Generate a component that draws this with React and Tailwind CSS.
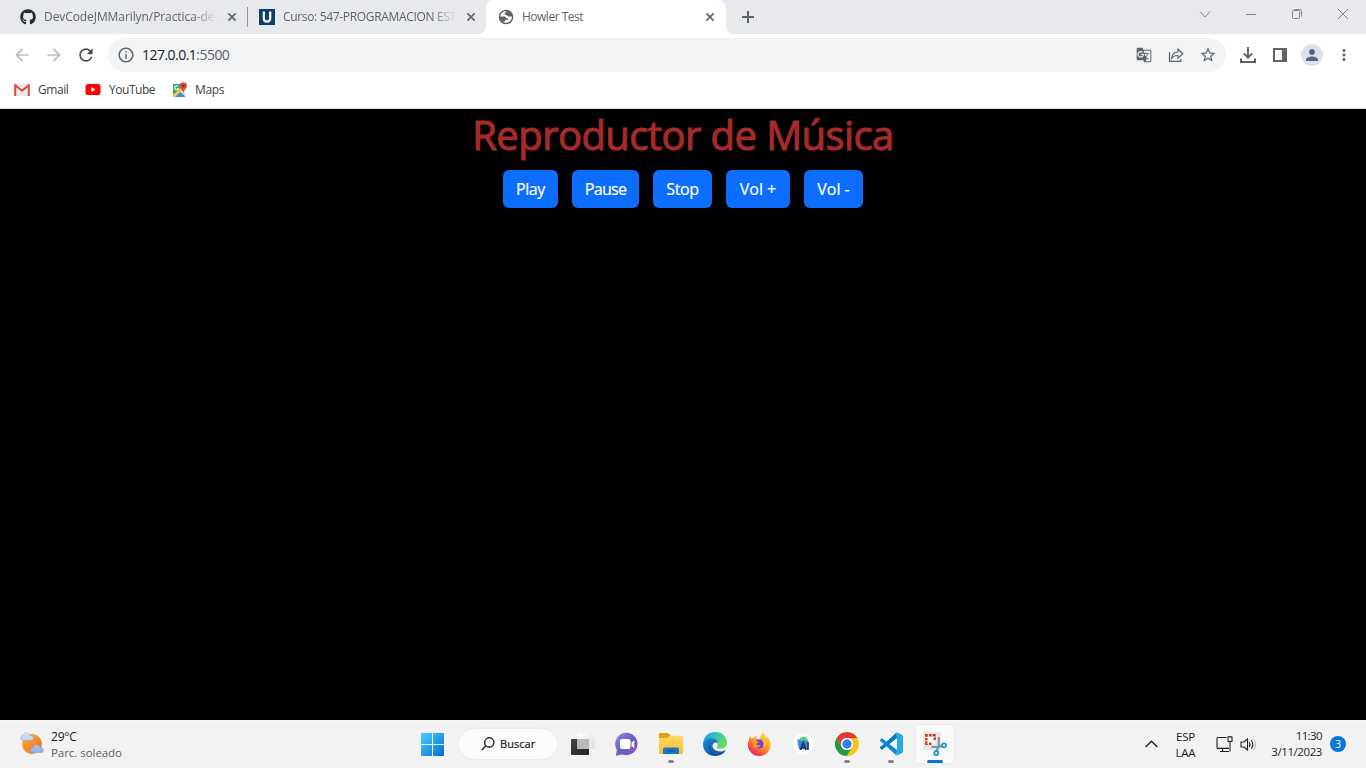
import React from 'react';
import { MdArrowBack, MdArrowForward, MdRefresh, MdInfoOutline, MdGTranslate, MdStarBorder, MdPerson, MdMoreVert } from 'react-icons/md';
import { FaGithub } from 'react-icons/fa';

function TabClose() {
  return (
    <svg className="h-[10px] w-[10px] shrink-0" viewBox="0 0 10 10" stroke="#5f6368" strokeWidth="1.6">
      <path d="M1.4 1.4 8.6 8.6M8.6 1.4 1.4 8.6" />
    </svg>
  );
}

function TabStrip() {
  return (
    <div className="flex h-[34px] shrink-0 bg-white text-[12px] text-[#5f6368]">
      <div className="flex w-[486px] rounded-br-lg bg-[#e8e9ed]">
        <div className="flex w-[247px] items-center pl-5">
          <FaGithub className="h-4 w-4 shrink-0 text-[#24292f]" />
          <span className="ml-2 w-[176px] shrink-0 whitespace-nowrap tracking-[-0.08px] [mask-image:linear-gradient(to_right,black_148px,transparent_173px)]">DevCodeJMMarilyn/Practica-de-</span>
          <span className="ml-[7px] flex"><TabClose /></span>
        </div>
        <div className="mt-[7px] h-5 w-px bg-[#909297]" />
        <div className="flex w-[238px] items-center pl-[11px]">
          <svg className="h-4 w-4 shrink-0" viewBox="0 0 16 16">
            <path fill="#103d69" d="M0 0h16v16H0z" />
            <path d="M4.8 2.5v6.7q0 3.4 3.2 3.4t3.2-3.4V2.5" fill="none" stroke="#fff" strokeWidth="2.2" />
          </svg>
          <span className="ml-2 w-[176px] shrink-0 whitespace-nowrap tracking-[-0.33px] [mask-image:linear-gradient(to_right,black_148px,transparent_173px)]">Curso: 547-PROGRAMACION EST</span>
          <span className="ml-[7px] flex"><TabClose /></span>
        </div>
      </div>
      <div className="flex w-[240px] bg-[#e8e9ed]">
        <div className="flex w-full items-center rounded-t-lg bg-white pl-3">
          <svg className="h-4 w-4 shrink-0" viewBox="0 0 16 16">
            <circle cx="8" cy="8" r="7.3" fill="#5f6368" />
            <path fill="#fff" d="M2.2 7.5c.5-2.9 2.9-5.3 6-5.5-.1 1.1-.6 1.9-1.5 1.9-.3 1.4.3 2.1 1.6 2.2 1 .1 1.1 1.4 2.2 1.4h3.3c.4 3-1.9 6-5.4 6.3-1.3.1-2.4-.1-3.2-.7 1.2-.1 2.1-.8 2.1-2h1.5c.9 0 1.3-.7 1-1.7-1.1-.2-2-.4-2.4-1.3-.4-.9-2-.6-5.2-.6z" />
          </svg>
          <span className="ml-2 w-[183px] shrink-0 whitespace-nowrap tracking-[-0.5px]">Howler Test</span>
          <TabClose />
        </div>
      </div>
      <div className="flex flex-1 rounded-bl-lg bg-[#e8e9ed]">
        <div className="flex w-11 items-center justify-center">
          <svg className="h-3 w-3" viewBox="0 0 12 12" stroke="#5f6368" strokeWidth="2"><path d="M6 0v12M0 6h12" /></svg>
        </div>
        <svg className="ml-auto h-[28px] w-[184px]" viewBox="1182 0 184 28" fill="none" stroke="#85868a" strokeWidth="1">
          <path d="m1200 11.5 5 5.5 5-5.5M1246 14.5h10M1292.5 11.5q0-1 1-1h5q1 0 1 1v6q0 1-1 1h-5q-1 0-1-1zM1294.5 9.5h5q2 0 2 2v5M1338 9l10 10M1348 9l-10 10" />
        </svg>
      </div>
    </div>
  );
}

function Toolbar() {
  return (
    <div className="flex h-[41px] shrink-0 items-center bg-white pl-3 text-[#5f6368]">
      <MdArrowBack className="h-5 w-5 text-[#babcbe]" />
      <MdArrowForward className="ml-3 h-5 w-5 text-[#babcbe]" />
      <MdRefresh className="ml-3 h-5 w-5 text-[#4b4f54]" />
      <div className="ml-3 flex h-[34px] w-[1118px] items-center rounded-full bg-[#f1f3f4] pl-[9px]">
        <MdInfoOutline className="h-[18px] w-[18px]" />
        <span className="ml-[7px] text-[14px] tracking-[-0.53px] text-[#202124]">127.0.0.1<span className="text-[#5f6368]">:5500</span></span>
        <div className="ml-auto flex items-center gap-4 pr-[10px]">
          <MdGTranslate className="h-4 w-4" />
          <svg className="h-4 w-4" viewBox="0 0 16 16" fill="none" stroke="currentColor" strokeWidth="1.2">
            <path d="M1.5 5v9.4h11.3V12M3.6 11.2C4 7 6.5 5.2 10 5V2.2l4.8 4.6-4.8 4.4V8.5c-3-.1-5 .7-6.4 2.7z" />
          </svg>
          <MdStarBorder className="-mx-px h-[18px] w-[18px]" />
        </div>
      </div>
      <svg className="ml-[14px] h-4 w-4" viewBox="0 0 16 16" fill="none" stroke="currentColor" strokeWidth="2">
        <path d="M8 0v10.5M3.8 6.4 8 10.6l4.2-4.2M1 11.5V15h14v-3.5" />
      </svg>
      <svg className="ml-[17px] h-[14px] w-[14px]" viewBox="0 0 14 14"><path fill="currentColor" fillRule="evenodd" d="M0 0h14v14H0zM2 2v10h7V2z" /></svg>
      <div className="ml-[14px] flex h-[22px] w-[22px] items-center justify-center rounded-full bg-[#dee1e6] text-[#566580]">
        <MdPerson className="h-[18px] w-[18px]" />
      </div>
      <MdMoreVert className="ml-3 h-[18px] w-[18px]" />
    </div>
  );
}

function Bookmarks() {
  return (
    <div className="flex h-[34px] shrink-0 items-center border-b border-[#dadce0] bg-white pb-1 pl-[14px] text-[12px] text-[#3c4043]">
      <svg className="h-[12px] w-4" viewBox="0 0 16 12">
        <path fill="#e9e9e9" d="M1 0h14v12H1z" />
        <path fill="none" stroke="#dd4b3e" strokeWidth="2" d="M1.2 12V1.2L8 6.7l6.8-5.5V12" />
      </svg>
      <span className="ml-2 w-[39px] whitespace-nowrap tracking-[-0.45px]">Gmail</span>
      <svg className="ml-2 h-[11px] w-4" viewBox="0 0 16 11"><rect x=".5" width="15" height="11" rx="2.8" fill="#f00" /><path fill="#fff" d="M6.4 3.1v4.8l4-2.4z" /></svg>
      <span className="ml-2 w-[55px] whitespace-nowrap tracking-[-0.47px]">YouTube</span>
      <svg className="ml-2 h-4 w-4" viewBox="0 0 16 16">
        <path fill="#35a76a" d="M1 2h12v13H1z" />
        <path fill="#f7c843" d="m1 13 12-11v4L3 15H1z" />
        <path fill="#4f87ed" d="m3.3 15 4.5-4.6 5.2 4.6z" />
        <path fill="#e3e5e8" d="m8.3 9.8 4.7-4.3V14z" />
        <path d="M6.2 4.5a2 2 0 1 0 .3 2H4.7" fill="none" stroke="#fff" strokeWidth="1.1" />
        <path fill="#df4b3f" d="M11.3.2a3.7 3.7 0 0 0-3.7 3.7c0 2.2 2.8 3.2 3.7 7 .9-3.8 3.7-4.8 3.7-7A3.7 3.7 0 0 0 11.3.2z" />
        <circle cx="11.3" cy="3.9" r="1.3" fill="#8b2520" />
      </svg>
      <span className="ml-[7px] whitespace-nowrap tracking-[-0.35px]">Maps</span>
    </div>
  );
}

const btn = 'h-[38px] rounded-md bg-[#0d6efd] text-center text-[16px] leading-[38px] text-white whitespace-nowrap [-webkit-text-stroke:0.2px_white]';

function Player() {
  return (
    <main className="flex flex-1 flex-col items-center bg-black">
      <h1 className="mt-[2px] h-[48px] whitespace-nowrap text-[40px] font-normal leading-[48px] tracking-[-0.58px] text-[#a52a2a] [-webkit-text-stroke:1.1px_#a52a2a]">Reproductor de Música</h1>
      <div className="mt-[11px] flex gap-[14px]">
        <button className={btn + ' w-[55px] tracking-[-0.4px]'}>Play</button>
        <button className={btn + ' w-[67px] tracking-[-0.7px]'}>Pause</button>
        <button className={btn + ' w-[59px] tracking-[-0.4px]'}>Stop</button>
        <button className={btn + ' w-[64px] tracking-[0px]'}>Vol +</button>
        <button className={btn + ' w-[59px] tracking-[0px]'}>Vol -</button>
      </div>
    </main>
  );
}

function TaskIcon({ children, running }) {
  return (
    <div className="flex h-12 w-11 flex-col items-center pt-3">
      <svg className="h-6 w-6 overflow-visible" viewBox="0 0 24 24">{children}</svg>
      {running && <div className="mt-1 h-[3px] w-[6px] rounded-full bg-[#858585]" />}
    </div>
  );
}

function Taskbar() {
  return (
    <footer className="flex h-12 shrink-0 border-t border-[#f7f7f7] bg-[#f2f2f2] text-[11px] text-[#1b1b1b]">
      <div className="flex w-[410px] pl-5">
        <svg className="mt-[11px] h-6 w-6" viewBox="0 0 24 24">
          <defs>
            <linearGradient id="sun" x1="0" y1="0" x2="1" y2="1"><stop stopColor="#fbb52b" /><stop offset="1" stopColor="#ed6423" /></linearGradient>
            <linearGradient id="cloud" x1="0" y1="0" x2="0" y2="1"><stop stopColor="#d6e5fa" /><stop offset="1" stopColor="#8caee8" /></linearGradient>
          </defs>
          <circle cx="12" cy="12" r="10" fill="url(#sun)" />
          <path fill="url(#cloud)" stroke="#8aa9e0" strokeWidth=".5" d="M3 8.5a2.5 2.5 0 0 1 0-5C4-.3 9-.2 9.7 3.4c5 0 4.3 5.1 1.5 5.1zM13 20.5a2.5 2.5 0 0 1 0-5c1-4 6.5-3.5 7 0 4.5 0 4.5 5 1.5 5z" />
        </svg>
        <div className="ml-[7px] mt-2 leading-4">
          <div className="text-[12px] tracking-[-0.2px]">29°C</div>
          <div className="whitespace-nowrap text-[11.5px] tracking-[-0.05px] text-[#606060]">Parc. soleado</div>
        </div>
      </div>
      <div className="-mt-px flex">
        <TaskIcon>
          <defs><linearGradient id="win" x1="0" y1="0" x2="1" y2="1"><stop stopColor="#4bd0fb" /><stop offset="1" stopColor="#0070cf" /></linearGradient></defs>
          <path fill="url(#win)" d="M1 1.7Q1 1 1.7 1H12v11H1zM13 1h10.3q.7 0 .7.7V12H13zM1 13h11v11H1.7q-.7 0-.7-.7zM13 13h11v10.3q0 .7-.7.7H13z" />
        </TaskIcon>
        <div className="ml-[5px] mt-[9px] flex h-[30px] w-[98px] items-center rounded-full bg-[#fcfcfc] pl-[22px] shadow-[0_0_1px_1px_#ececec]">
          <svg className="h-[14px] w-[14px]" viewBox="0 0 14 14" fill="none" stroke="#222" strokeWidth="1.4"><circle cx="8.3" cy="5.4" r="4.6" /><path d="M5 8.7.8 13" /></svg>
          <span className="ml-[5px] tracking-[0.05px] [-webkit-text-stroke:0.2px_#1b1b1b]">Buscar</span>
        </div>
        <div className="ml-1 flex">
          <TaskIcon>
            <defs>
              <linearGradient id="tv" x1="0" y1="0" x2="1" y2="1"><stop stopColor="#454545" /><stop offset="1" stopColor="#20201e" /></linearGradient>
              <linearGradient id="tf" x1="0" y1="0" x2="1" y2="1"><stop stopColor="#fff" /><stop offset="1" stopColor="#ddd" /></linearGradient>
            </defs>
            <rect y="7" width="18" height="16" rx="1" fill="url(#tv)" />
            <rect x="6" y="1" width="18" height="16" rx="1" fill="url(#tf)" />
            <path fill="#b9b9b9" d="M6 7h12v10H6z" />
          </TaskIcon>
          <TaskIcon>
            <defs><linearGradient id="chat" x1="0" y1="0" x2="1" y2="1"><stop stopColor="#8793e0" /><stop offset=".5" stopColor="#6561c2" /><stop offset="1" stopColor="#9a50b5" /></linearGradient></defs>
            <path fill="url(#chat)" d="M12.5.8A11.3 11.3 0 1 1 7 22.5L.9 23.8l1-5.8A11.3 11.3 0 0 1 12.5.8z" />
            <rect x="5" y="7" width="10.5" height="10" rx="2" fill="#fff" /><path fill="#fff" d="m16.5 10.5 2.8-2.3v8.1l-2.8-2.4z" />
          </TaskIcon>
          <TaskIcon running>
            <defs><linearGradient id="folder" x1="0" y1="0" x2="0" y2="1"><stop stopColor="#ffdc67" /><stop offset="1" stopColor="#f6bd31" /></linearGradient></defs>
            <path fill="#dca10d" d="M0 2q0-1 1-1h8l3 3-3 3H0z" />
            <path fill="url(#folder)" d="M0 6h8.5l2.6-2.3H23q1 0 1 1V22H1q-1 0-1-1z" />
            <path fill="#1976c7" d="M4 22v-4.5q0-2 2-2h12q2 0 2 2V22z" /><path fill="#0f5a9e" d="M8 18h8v1.5H8z" />
          </TaskIcon>
          <TaskIcon>
            <defs>
              <linearGradient id="edge" x1="0" y1="0" x2="1" y2=".4"><stop stopColor="#269bd9" /><stop offset=".5" stopColor="#2bc1c8" /><stop offset="1" stopColor="#65dd55" /></linearGradient>
              <linearGradient id="edgeb" x1="0" y1="0" x2="1" y2="1"><stop stopColor="#178bd6" /><stop offset="1" stopColor="#114a92" /></linearGradient>
            </defs>
            <path fill="url(#edge)" d="M.2 10.6C1.2 3.9 6.1 0 12.1 0 19 0 24 4.8 24 10.4c0 4-3 6.2-6.7 6.2-3.2 0-4.1-1.1-3.3-2.1 2.4-3.2-.2-6.6-4.2-6.6-4.1 0-7.8 2.4-9.6 6.1z" />
            <path fill="url(#edgeb)" d="M.1 13C-.2 8.9 4.4 5.7 9.5 6.4c3.3.4 5.7 2.6 5.5 5.4-.8-1.9-3.8-2-5.1.4-2.2 4.2 4.8 9.7 12.2 6.1.4 0 .6.2.2.8C19.9 22.5 16 24 12 24 5.5 24 .2 19.1.1 13z" />
            <path fill="#164b96" d="M9.2 9.7c-4.7 3.8-1.8 11 4.8 12.5 3 .7 5.7-.1 8.3-3.1-2.1 3.2-5.9 4.9-10.3 4.9-6-.6-9.2-10.3-2.8-14.3z" opacity=".7" />
          </TaskIcon>
          <TaskIcon>
            <defs><linearGradient id="fox" x1=".9" y1="0" x2=".2" y2="1"><stop stopColor="#ffe94c" /><stop offset=".45" stopColor="#ff9b25" /><stop offset="1" stopColor="#ee165f" /></linearGradient></defs>
            <path fill="url(#fox)" d="M15.8.5c2 2 3.1 3.4 3.2 5.2 1.2.4 1.4-.3 1.5-1 2 2.2 3.1 5.2 3.1 8A11.4 11.4 0 1 1 2.1 7.4c0-1.5.8-2.8 1.3-3.3 0 1.4.4 2 .9 2.5 1-.6 2-.7 2.8-.6.5-1.2 1.4-2 2.6-2.4-.5 1.2-.5 2.2.1 3.1h3.8C12.7 4.5 14 2.4 15.8.5z" />
            <circle cx="12.2" cy="12.1" r="4.5" fill="#6e42d3" />
            <path fill="#ff9428" d="m5 8.6 3.4-.5 1.8 1.5 2.1.1c.1.8-2.3 1.2-2.7 2.2.6 1.7 2.8 1.7 4.3.9-1 3.7-7.1 3.9-8.4.4z" />
            <path fill="#ffc332" d="M16 3.6c.4 3 2.9 4 3.2 7.4-1-1.6-2-2.2-3.4-2.5 1.1 2.2 1.2 4.3.2 6.3 3.5-1.2 4.3-7.8 0-11.2z" />
          </TaskIcon>
          <TaskIcon>
            <circle cx="12" cy="12" r="10.3" fill="#fff" />
            <path fill="#3e83f1" d="M6.3 7.5h10.5v9.8h-9z" />
            <path fill="#3ddc84" d="M8.4 6.5 11 5h4l2 3.7H10z" />
            <path stroke="#173151" strokeWidth="1.6" fill="none" d="m9.5 18 2.7-7.5L15 18M10.3 15.5h3.8M17 10v8" />
          </TaskIcon>
          <TaskIcon running>
            <path fill="#e33b2e" d="M1.6 6A12 12 0 0 1 22.4 6H12a6 6 0 0 0-5.2 9z" />
            <path fill="#fbc116" d="M22.4 6A12 12 0 0 1 12 24l5.2-9A6 6 0 0 0 12 6z" />
            <path fill="#249a41" d="M12 24A12 12 0 0 1 1.6 6l5.2 9a6 6 0 0 0 10.4 0z" />
            <circle cx="12" cy="12" r="6" fill="#fff" /><circle cx="12" cy="12" r="4.7" fill="#3c7eed" />
          </TaskIcon>
          <TaskIcon running>
            <path fill="#0879bd" d="m17.5.4-14 12.8L1 15.1q-.5.5 0 1l1.3 1.3q.5.4 1.1 0L18 6z" />
            <path fill="#1389cc" d="m17.5 23.6-14-12.8L1 8.9q-.5-.5 0-1l1.3-1.3q.5-.4 1.1 0L18 18z" />
            <path fill="#28a8ea" d="m17.5.3 5.3 2.5q1.2.6 1.2 1.8v14.8q0 1.2-1.2 1.8l-5.3 2.5c-.6.2-1.1 0-1.6-.5.7.7 2.1.3 2.1-.8V1.6C18 .5 16.6.1 15.9.8c.5-.5 1-.7 1.6-.5z" />
          </TaskIcon>
          <div className="ml-[3px] mt-[5px] flex h-[38px] w-[38px] flex-col items-center rounded bg-[#fafafa] pt-[7px] shadow-[0_0_1px_1px_#e9e9e9]">
            <svg className="h-6 w-6" viewBox="0 0 24 24">
              <rect width="18" height="18" rx="1.5" fill="#e7e7e7" />
              <path fill="#fff" d="M4.5 4.5H12v7H4.5z" />
              <path fill="#d33d08" d="M2 2h2.8v2.8H2zM6 2h2.5v2.5H6zM9.5 2H12v2.5H9.5zM2 6h2.5v2.5H2zM2 9.5h2.5v2.3H2zM6 10.5h2.5V13H6zM2 12h3v1H2zM10.5 5.5H13V8h-2.5zM12.2 2h.8v2.5h-.8z" />
              <path fill="none" stroke="#8d9093" strokeWidth="2.2" d="M15.8 5v9l-2.3 5M8.5 14.8h8l3-1" />
              <g fill="#fff" stroke="#149bd7" strokeWidth="1.8"><circle cx="21" cy="13.3" r="2" /><circle cx="13.3" cy="21" r="2" /></g>
            </svg>
            <div className="mt-1 h-[3px] w-4 shrink-0 rounded-full bg-[#0676d2]" />
          </div>
        </div>
      </div>
      <div className="-mt-px ml-auto flex w-[221px]">
        <svg className="mt-[20px] h-2 w-[13px]" viewBox="0 0 13 8" fill="none" stroke="#222" strokeWidth="1.4"><path d="m.7 7 5.8-5.8L12.3 7" /></svg>
        <div className="ml-[9px] mt-[9px] w-[37px] text-center text-[11.5px] leading-4 tracking-[-0.25px]"><div>ESP</div><div>LAA</div></div>
        <svg className="ml-[12px] mt-4 h-[17px] w-[42px]" viewBox="0 0 42 17" fill="none" stroke="#222" strokeWidth="1.1">
          <path d="M10.5 1.5H2q-1 0-1 1v8.9q0 1 1 1h11M4 15.5h9M6.5 12.5v3M14 6v9.5M12 1h4v4.5h-4zM13 1V0M15 1V0" />
          <path d="M25 6h3l3.5-3v11L28 11h-3zM33.3 6q1.5 2.5 0 5M35.3 4.3q3 4.2 0 8.4" />
          <path stroke="#bbb" d="M37.3 2.5q4.5 6 0 12" />
        </svg>
        <div className="ml-[3px] mt-2 w-[61px] whitespace-nowrap text-right text-[11.5px] leading-4"><div className="tracking-[-0.6px]">11:30</div><div className="tracking-[-0.42px]">3/11/2023</div></div>
        <div className="ml-[8px] mt-4 h-4 w-4 rounded-full bg-[#0878d4] text-center text-[10px] leading-4 text-white">3</div>
      </div>
    </footer>
  );
}

export default function App() {
  return (
    <div className="flex h-screen w-full flex-col overflow-hidden font-['Open_Sans','Noto_Sans',sans-serif]">
      <TabStrip />
      <Toolbar />
      <Bookmarks />
      <Player />
      <Taskbar />
    </div>
  );
}
